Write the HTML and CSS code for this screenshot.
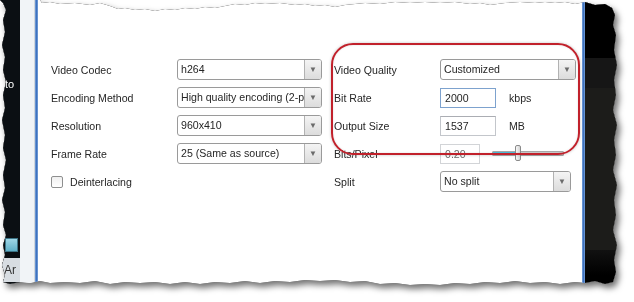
FILE: index.html
```html
<!DOCTYPE html>
<html lang="en">
<head>
  <meta charset="UTF-8" />
  <title>Video Settings</title>
  <link rel="stylesheet" href="styles.css">
</head>
<body>
  <div class="shot">
    <div class="paper">
      <div class="desk-left">
        <span class="desk-text">to</span>
        <span class="desk-icon"></span>
        <span class="desk-tab">Ar</span>
      </div>
      <div class="frame-left"></div>
      <div class="edge"></div>

      <div class="panel">
        <div class="form">
          <label class="lbl">Video Codec</label>
          <div class="combo"><span class="val">h264</span><span class="arrow">&#9660;</span></div>
          <label class="lbl">Video Quality</label>
          <div class="combo wide"><span class="val">Customized</span><span class="arrow">&#9660;</span></div>

          <label class="lbl">Encoding Method</label>
          <div class="combo"><span class="val">High quality encoding (2-pass)</span><span class="arrow">&#9660;</span></div>
          <label class="lbl">Bit Rate</label>
          <div class="field"><span class="box focus">2000</span><span class="unit">kbps</span></div>

          <label class="lbl">Resolution</label>
          <div class="combo"><span class="val">960x410</span><span class="arrow">&#9660;</span></div>
          <label class="lbl">Output Size</label>
          <div class="field"><span class="box">1537</span><span class="unit">MB</span></div>

          <label class="lbl">Frame Rate</label>
          <div class="combo"><span class="val">25 (Same as source)</span><span class="arrow">&#9660;</span></div>
          <label class="lbl">Bits/Pixel</label>
          <div class="field">
            <span class="box small dim">0.20</span>
            <span class="slider"><span class="fill"></span><span class="thumb"></span></span>
          </div>

          <label class="check"><span class="tick"></span>Deinterlacing</label>
          <span></span>
          <label class="lbl">Split</label>
          <div class="combo split"><span class="val">No split</span><span class="arrow">&#9660;</span></div>
        </div>
        <div class="callout"></div>
      </div>

      <div class="edge"></div>
      <div class="desk-right"></div>
    </div>
  </div>
</body>
</html>
```

FILE: styles.css
```css
* {
  box-sizing: border-box;
}
body {
  margin: 0;
  background: #fff;
  font-family: 'Liberation Sans', Arial, sans-serif;
  font-size: 10.6px;
  color: #262626;
  width: 634px;
  height: 302px;
  overflow: hidden;
}
.shot {
  width: 620px;
  height: 292px;
  filter: drop-shadow(0 0 0.7px #000) drop-shadow(3px 4px 3px rgba(0, 0, 0, 0.55));
}
.paper {
  display: flex;
  width: 620px;
  height: 290px;
  background: #fff;
  clip-path: polygon(0 0, 40px 0, 42px 3px, 50px 2px, 60px 4px, 75px 3px, 90px 5px, 100px 3px, 110px 6px, 118px 9px, 125px 8px, 135px 10px, 145px 9px, 155px 11px, 165px 9px, 175px 10px, 185px 8px, 195px 9px, 205px 7px, 215px 8px, 225px 6px, 235px 4px, 245px 5px, 255px 3px, 265px 4px, 280px 3px, 295px 5px, 305px 4px, 315px 6px, 325px 5px, 335px 7px, 345px 5px, 355px 4px, 365px 3px, 380px 4px, 395px 2px, 410px 3px, 425px 2px, 440px 3px, 455px 2px, 470px 4px, 480px 3px, 490px 5px, 505px 3px, 520px 2px, 535px 3px, 545px 2px, 555px 3px, 565px 2px, 575px 4px, 585px 2px, 595px 5px, 605px 4px, 612px 8px, 615px 15px, 613px 25px, 616px 35px, 614px 50px, 617px 65px, 614px 80px, 616px 95px, 613px 110px, 617px 125px, 614px 140px, 616px 155px, 613px 170px, 617px 185px, 614px 200px, 616px 215px, 613px 230px, 617px 245px, 614px 260px, 616px 272px, 613px 282px, 605px 284px, 595px 281px, 585px 283px, 575px 282px, 560px 284px, 545px 282px, 530px 283px, 515px 281px, 500px 283px, 485px 282px, 470px 284px, 455px 283px, 440px 285px, 425px 284px, 410px 285px, 395px 283px, 380px 284px, 365px 281px, 350px 282px, 335px 280px, 320px 281px, 305px 280px, 290px 282px, 275px 281px, 260px 283px, 245px 281px, 230px 283px, 215px 282px, 200px 284px, 185px 282px, 170px 284px, 155px 282px, 140px 283px, 125px 282px, 110px 284px, 95px 281px, 80px 283px, 65px 282px, 50px 283px, 40px 281px, 30px 283px, 20px 282px, 10px 284px, 3px 282px, 5px 275px, 2px 265px, 5px 255px, 3px 245px, 6px 235px, 3px 225px, 5px 212px, 2px 200px, 5px 188px, 3px 175px, 6px 160px, 3px 148px, 5px 135px, 2px 120px, 5px 108px, 3px 95px, 6px 82px, 3px 70px, 5px 57px, 2px 45px, 5px 32px, 3px 20px, 6px 10px, 3px 3px);
}

/* desktop bits around the window */
.desk-left {
  width: 20px;
  background: #0b0f13;
  display: flex;
  flex-direction: column;
  padding-top: 78px;
  color: #fff;
}
.desk-text {
  font-size: 11px;
  padding-left: 5px;
}
.desk-icon {
  margin: 148px 0 0 5px;
  width: 13px;
  height: 14px;
  background: linear-gradient(#9fd6e6, #5fb0c8);
  border: 1px solid #3d7486;
}
.desk-tab {
  margin-top: 6px;
  height: 24px;
  padding: 5px 0 0 4px;
  background: #d8dde2;
  color: #333;
  font-size: 12px;
}
.frame-left {
  width: 15px;
  background: #f1f4f7;
  border-right: 1px solid #d0d6dc;
}
.edge {
  width: 3px;
  background: linear-gradient(to right, #7aa4dc, #3f72be, #7aa4dc);
}
.desk-right {
  flex: 1;
  background: linear-gradient(#000 0, #000 58px, #161616 58px, #161616 88px, #1c1c1a 88px, #1c1c1a 250px, #111 250px, #000 275px);
}

/* window content */
.panel {
  position: relative;
  width: 544px;
  padding: 59px 0 0 13px;
}
.form {
  display: grid;
  grid-template-columns: 126px 145px 118px 136px;
  grid-auto-rows: 21px;
  row-gap: 7px;
  align-items: center;
}
.lbl:nth-child(4n+3) {
  margin-left: 12px;
}
.combo {
  display: flex;
  height: 21px;
  border: 1px solid #9a9a9a;
  border-radius: 3px;
  background: #fff;
  overflow: hidden;
}
.combo .val {
  flex: 1;
  padding: 3px 0 0 3px;
  white-space: nowrap;
  overflow: hidden;
}
.combo .arrow {
  width: 17px;
  border-left: 1px solid #b2b2b2;
  background: linear-gradient(#f4f4f4, #dcdcdc);
  color: #6b6b6b;
  font-size: 8px;
  text-align: center;
  line-height: 19px;
}
.combo.wide {
  width: 136px;
}
.combo.split {
  width: 131px;
}
.field {
  display: flex;
  align-items: center;
}
.box {
  width: 56px;
  height: 20px;
  padding: 3px 0 0 4px;
  border: 1px solid #c3c6cb;
  border-top-color: #abadb3;
  background: #fff;
}
.box.focus {
  border-color: #7da2ce;
}
.box.small {
  width: 40px;
}
.box.dim {
  color: #6d6d6d;
  border-color: #d2d4d7;
}
.unit {
  margin-left: 13px;
}
.slider {
  position: relative;
  margin-left: 12px;
  width: 72px;
  height: 5px;
  background: #cfcfcf;
  border: 1px solid #a9a9a9;
  border-radius: 1px;
}
.slider .fill {
  position: absolute;
  left: 0;
  top: 0;
  width: 22px;
  height: 3px;
  background: #4fc0dc;
}
.slider .thumb {
  position: absolute;
  left: 22px;
  top: -7px;
  width: 6px;
  height: 16px;
  border: 1px solid #8a8a8a;
  border-radius: 2px;
  background: linear-gradient(to right, #f8f8f8, #d4d4d4);
}
.check {
  display: flex;
  align-items: center;
  gap: 7px;
}
.tick {
  width: 12px;
  height: 12px;
  border: 1px solid #8e8f8f;
  border-radius: 2px;
  background: linear-gradient(#f0f0f0, #fff);
}
.callout {
  position: absolute;
  left: 293px;
  top: 43px;
  width: 249px;
  height: 112px;
  border: 2px solid #c1212b;
  border-radius: 22px;
  box-shadow: 0 0 3px rgba(0, 0, 0, 0.25), inset 0 0 2px rgba(0, 0, 0, 0.15);
}
```
